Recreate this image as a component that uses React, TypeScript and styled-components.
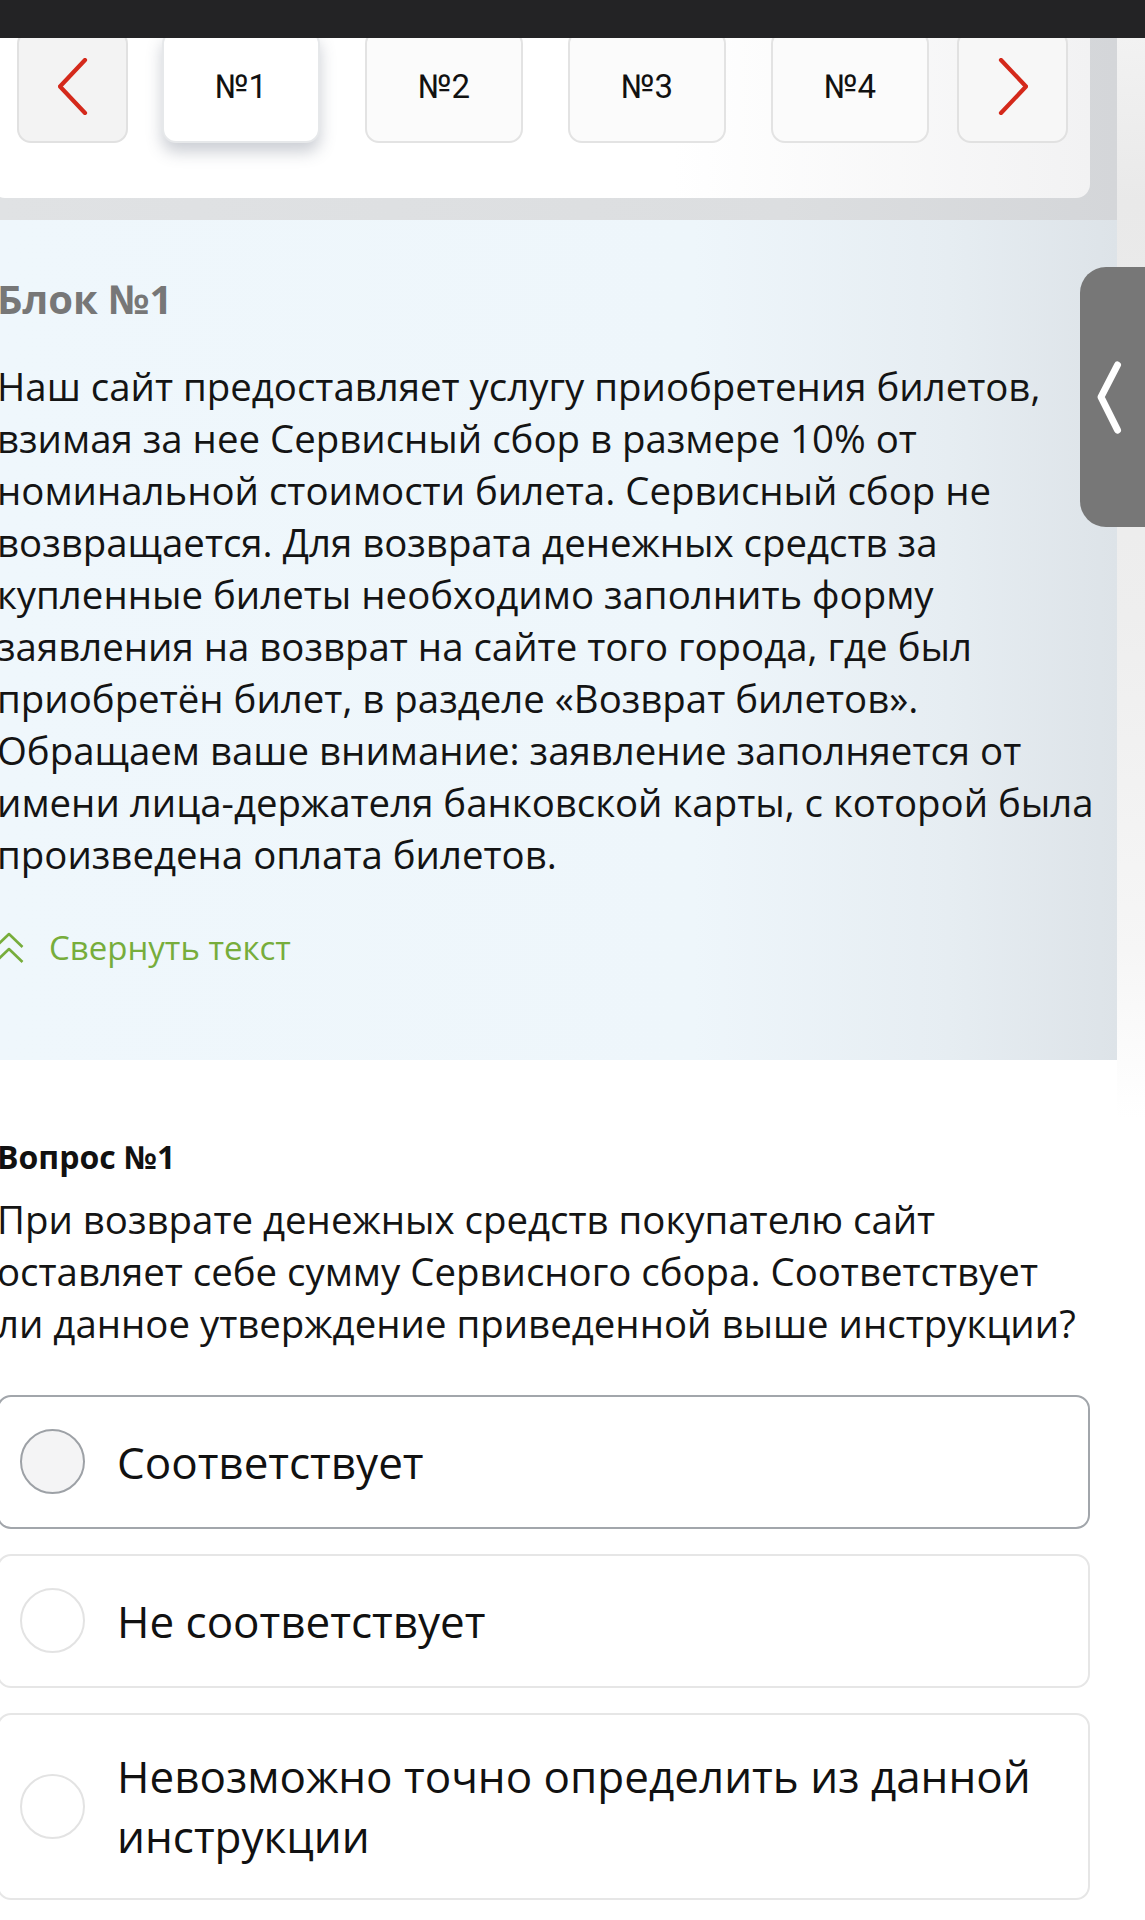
import React, { useState } from "react";
import styled, { createGlobalStyle, css } from "styled-components";

const GlobalStyle = createGlobalStyle`
  * { box-sizing: border-box; }
  html, body {
    margin: 0;
    padding: 0;
    background: #ffffff;
  }
  body {
    font-family: "Open Sans", "Noto Sans", sans-serif;
    color: #151515;
    overflow-x: hidden;
  }
`;

const Page = styled.div`
  position: relative;
  display: grid;
  grid-template-columns: 1117px 1fr;
  align-items: start;
  width: 1145px;
  min-height: 1920px;
  overflow: hidden;
`;

const TopBar = styled.header`
  position: fixed;
  top: 0;
  left: 0;
  right: 0;
  height: 38px;
  background: #232325;
  z-index: 10;
`;

const Main = styled.main`
  display: flex;
  flex-direction: column;
  min-width: 0;
`;

const Gutter = styled.aside`
  height: 1118px;
  background: linear-gradient(
    to bottom,
    #f4f4f4 0%,
    #e9e9e9 18%,
    #eeeeee 55%,
    #f6f6f6 85%,
    #ffffff 100%
  );
`;

/* ---------- block switcher ---------- */

const TabShelf = styled.section`
  background: linear-gradient(to right, #e0e2e4 0%, #dcdee0 70%, #d4d6d9 100%);
  padding-bottom: 22px;
`;

const TabPanel = styled.nav`
  display: flex;
  align-items: stretch;
  width: 1099px;
  margin-left: -9px;
  padding: 30px 0 55px 26px;
  background: linear-gradient(to right, #ffffff 0%, #ffffff 62%, #f2f2f3 100%);
  border-radius: 0 0 14px 14px;
`;

const ArrowButton = styled.button<{ $light?: boolean }>`
  display: grid;
  place-items: center;
  width: 111px;
  height: 113px;
  padding: 0;
  border: 2px solid #e1e1e1;
  border-radius: 14px;
  background: ${(p) => (p.$light ? "#f7f7f7" : "#f3f3f3")};
  cursor: pointer;
`;

const TabTrack = styled.div`
  display: flex;
  gap: 45.5px;
  margin: 0 28.5px 0 34px;
`;

const TabButton = styled.button<{ $active?: boolean }>`
  width: 157.5px;
  height: 113px;
  padding: 0;
  border: 2px solid #e3e3e3;
  border-radius: 14px;
  background: #fbfbfb;
  font-family: Roboto, "Open Sans", sans-serif;
  font-size: 33px;
  font-weight: 400;
  color: #111;
  cursor: pointer;
  ${(p) =>
    p.$active &&
    css`
      background: #ffffff;
      border-color: #e6e8ea;
      box-shadow: 0 9px 16px rgba(70, 80, 100, 0.28);
    `}
`;

/* ---------- instruction block ---------- */

const InfoBlock = styled.section`
  padding: 55px 0 90px;
  background: linear-gradient(
    to right,
    #eff7fc 0%,
    #eef6fb 62%,
    #e6edf2 85%,
    #dde3e8 100%
  );
`;

const Content = styled.div<{ $wide?: boolean }>`
  width: ${(p) => (p.$wide ? "1102px" : "1093px")};
  margin-left: -3px;
`;

const BlockTitle = styled.h2`
  margin: 0 0 37px;
  font-size: 40px;
  line-height: 48px;
  font-weight: 700;
  color: #777777;
`;

const BodyText = styled.p<{ $narrow?: boolean }>`
  margin: 0;
  font-size: 38.4px;
  line-height: 52px;
  font-weight: 400;
  color: #141414;
  padding-right: ${(p) => (p.$narrow ? "10px" : "0")};
`;

const CollapseLink = styled.button`
  display: flex;
  align-items: center;
  gap: 25px;
  margin-top: 46px;
  padding: 0;
  border: 0;
  background: none;
  font-family: "Open Sans", sans-serif;
  font-size: 33px;
  line-height: 44px;
  color: #77ad3b;
  cursor: pointer;
`;

/* ---------- question ---------- */

const QuestionSection = styled.section`
  padding: 76px 0 20px;
`;

const QuestionTitle = styled.h3`
  margin: 0 0 14.5px;
  font-size: 32px;
  line-height: 42px;
  font-weight: 700;
  color: #111;
`;

const Options = styled.div`
  display: flex;
  flex-direction: column;
  gap: 25px;
  margin-top: 46px;
`;

const OptionCard = styled.label<{ $focused?: boolean }>`
  display: flex;
  align-items: center;
  gap: 32px;
  min-height: 134px;
  padding: 31.5px 20px 31.5px 21px;
  border: 2px solid ${(p) => (p.$focused ? "#a2a6ab" : "#e6e6e6")};
  border-radius: 14px;
  background: #ffffff;
  cursor: pointer;
`;

const Radio = styled.span<{ $focused?: boolean }>`
  flex: 0 0 auto;
  width: 65px;
  height: 65px;
  border-radius: 50%;
  border: ${(p) => (p.$focused ? "2.5px solid #9da1a6" : "2px solid #e3e3e3")};
  background: ${(p) => (p.$focused ? "#f4f4f5" : "#ffffff")};
`;

const OptionText = styled.span`
  font-size: 44px;
  line-height: 60px;
  color: #111;
`;

const SideHandle = styled.button`
  position: absolute;
  top: 267px;
  right: 0;
  width: 65px;
  height: 260px;
  padding: 0;
  border: 0;
  border-radius: 26px 0 0 26px;
  background: #777777;
  cursor: pointer;
`;

const Chevron = ({ dir, color, width }: { dir: "left" | "right"; color: string; width: number }) => (
  <svg width="30" height="57" viewBox="0 0 30 57" fill="none">
    <polyline
      points={dir === "left" ? "27,2 2,28.5 27,55" : "3,2 28,28.5 3,55"}
      stroke={color}
      strokeWidth={width}
      strokeLinecap="round"
      strokeLinejoin="round"
    />
  </svg>
);

const DoubleUp = () => (
  <svg width="30" height="32" viewBox="0 0 30 32" fill="none" style={{ marginLeft: -3 }}>
    <polyline points="1.5,15 15,2 28.5,15" stroke="#77ad3b" strokeWidth="2.6" strokeLinejoin="round" />
    <polyline points="1.5,30 15,17 28.5,30" stroke="#77ad3b" strokeWidth="2.6" strokeLinejoin="round" />
  </svg>
);

const HandleGlyph = () => (
  <svg width="65" height="260" viewBox="0 0 65 260" fill="none">
    <polyline
      points="37.5,98 21,130 37.5,163"
      stroke="#ffffff"
      strokeWidth="7"
      strokeLinecap="round"
      strokeLinejoin="round"
    />
  </svg>
);

const answers = [
  "Соответствует",
  "Не соответствует",
  "Невозможно точно определить из данной инструкции",
];

export default function App() {
  const [tab, setTab] = useState(1);
  const [hover, setHover] = useState(0);

  return (
    <>
      <GlobalStyle />
      <TopBar />
      <Page>
        <Main>
          <TabShelf>
            <TabPanel>
              <ArrowButton aria-label="Назад" onClick={() => setTab((t) => Math.max(1, t - 1))}>
                <Chevron dir="left" color="#d4291b" width={4.2} />
              </ArrowButton>
              <TabTrack>
                {[1, 2, 3, 4].map((n) => (
                  <TabButton key={n} $active={tab === n} onClick={() => setTab(n)}>
                    №{n}
                  </TabButton>
                ))}
              </TabTrack>
              <ArrowButton $light aria-label="Вперёд" onClick={() => setTab((t) => Math.min(4, t + 1))}>
                <Chevron dir="right" color="#d4291b" width={4.2} />
              </ArrowButton>
            </TabPanel>
          </TabShelf>

          <InfoBlock>
            <Content $wide>
              <BlockTitle>Блок №{tab}</BlockTitle>
              <BodyText>
                Наш сайт предоставляет услугу приобретения билетов, взимая за нее Сервисный сбор в
                размере 10% от номинальной стоимости билета. Сервисный сбор не возвращается. Для
                возврата денежных средств за купленные билеты необходимо заполнить форму заявления на
                возврат на сайте того города, где был приобретён билет, в разделе «Возврат билетов».
                Обращаем ваше внимание: заявление заполняется от имени лица-держателя банковской
                карты, с которой была произведена оплата билетов.
              </BodyText>
              <CollapseLink>
                <DoubleUp />
                Свернуть текст
              </CollapseLink>
            </Content>
          </InfoBlock>

          <QuestionSection>
            <Content>
              <QuestionTitle>Вопрос №1</QuestionTitle>
              <BodyText $narrow>
                При возврате денежных средств покупателю сайт оставляет себе сумму Сервисного
                сбора. Соответствует ли данное утверждение приведенной выше инструкции?
              </BodyText>
              <Options>
                {answers.map((a, i) => (
                  <OptionCard key={a} $focused={hover === i} onMouseEnter={() => setHover(i)}>
                    <Radio $focused={hover === i} />
                    <OptionText>{a}</OptionText>
                  </OptionCard>
                ))}
              </Options>
            </Content>
          </QuestionSection>
        </Main>
        <Gutter />
        <SideHandle aria-label="Открыть панель">
          <HandleGlyph />
        </SideHandle>
      </Page>
    </>
  );
}
